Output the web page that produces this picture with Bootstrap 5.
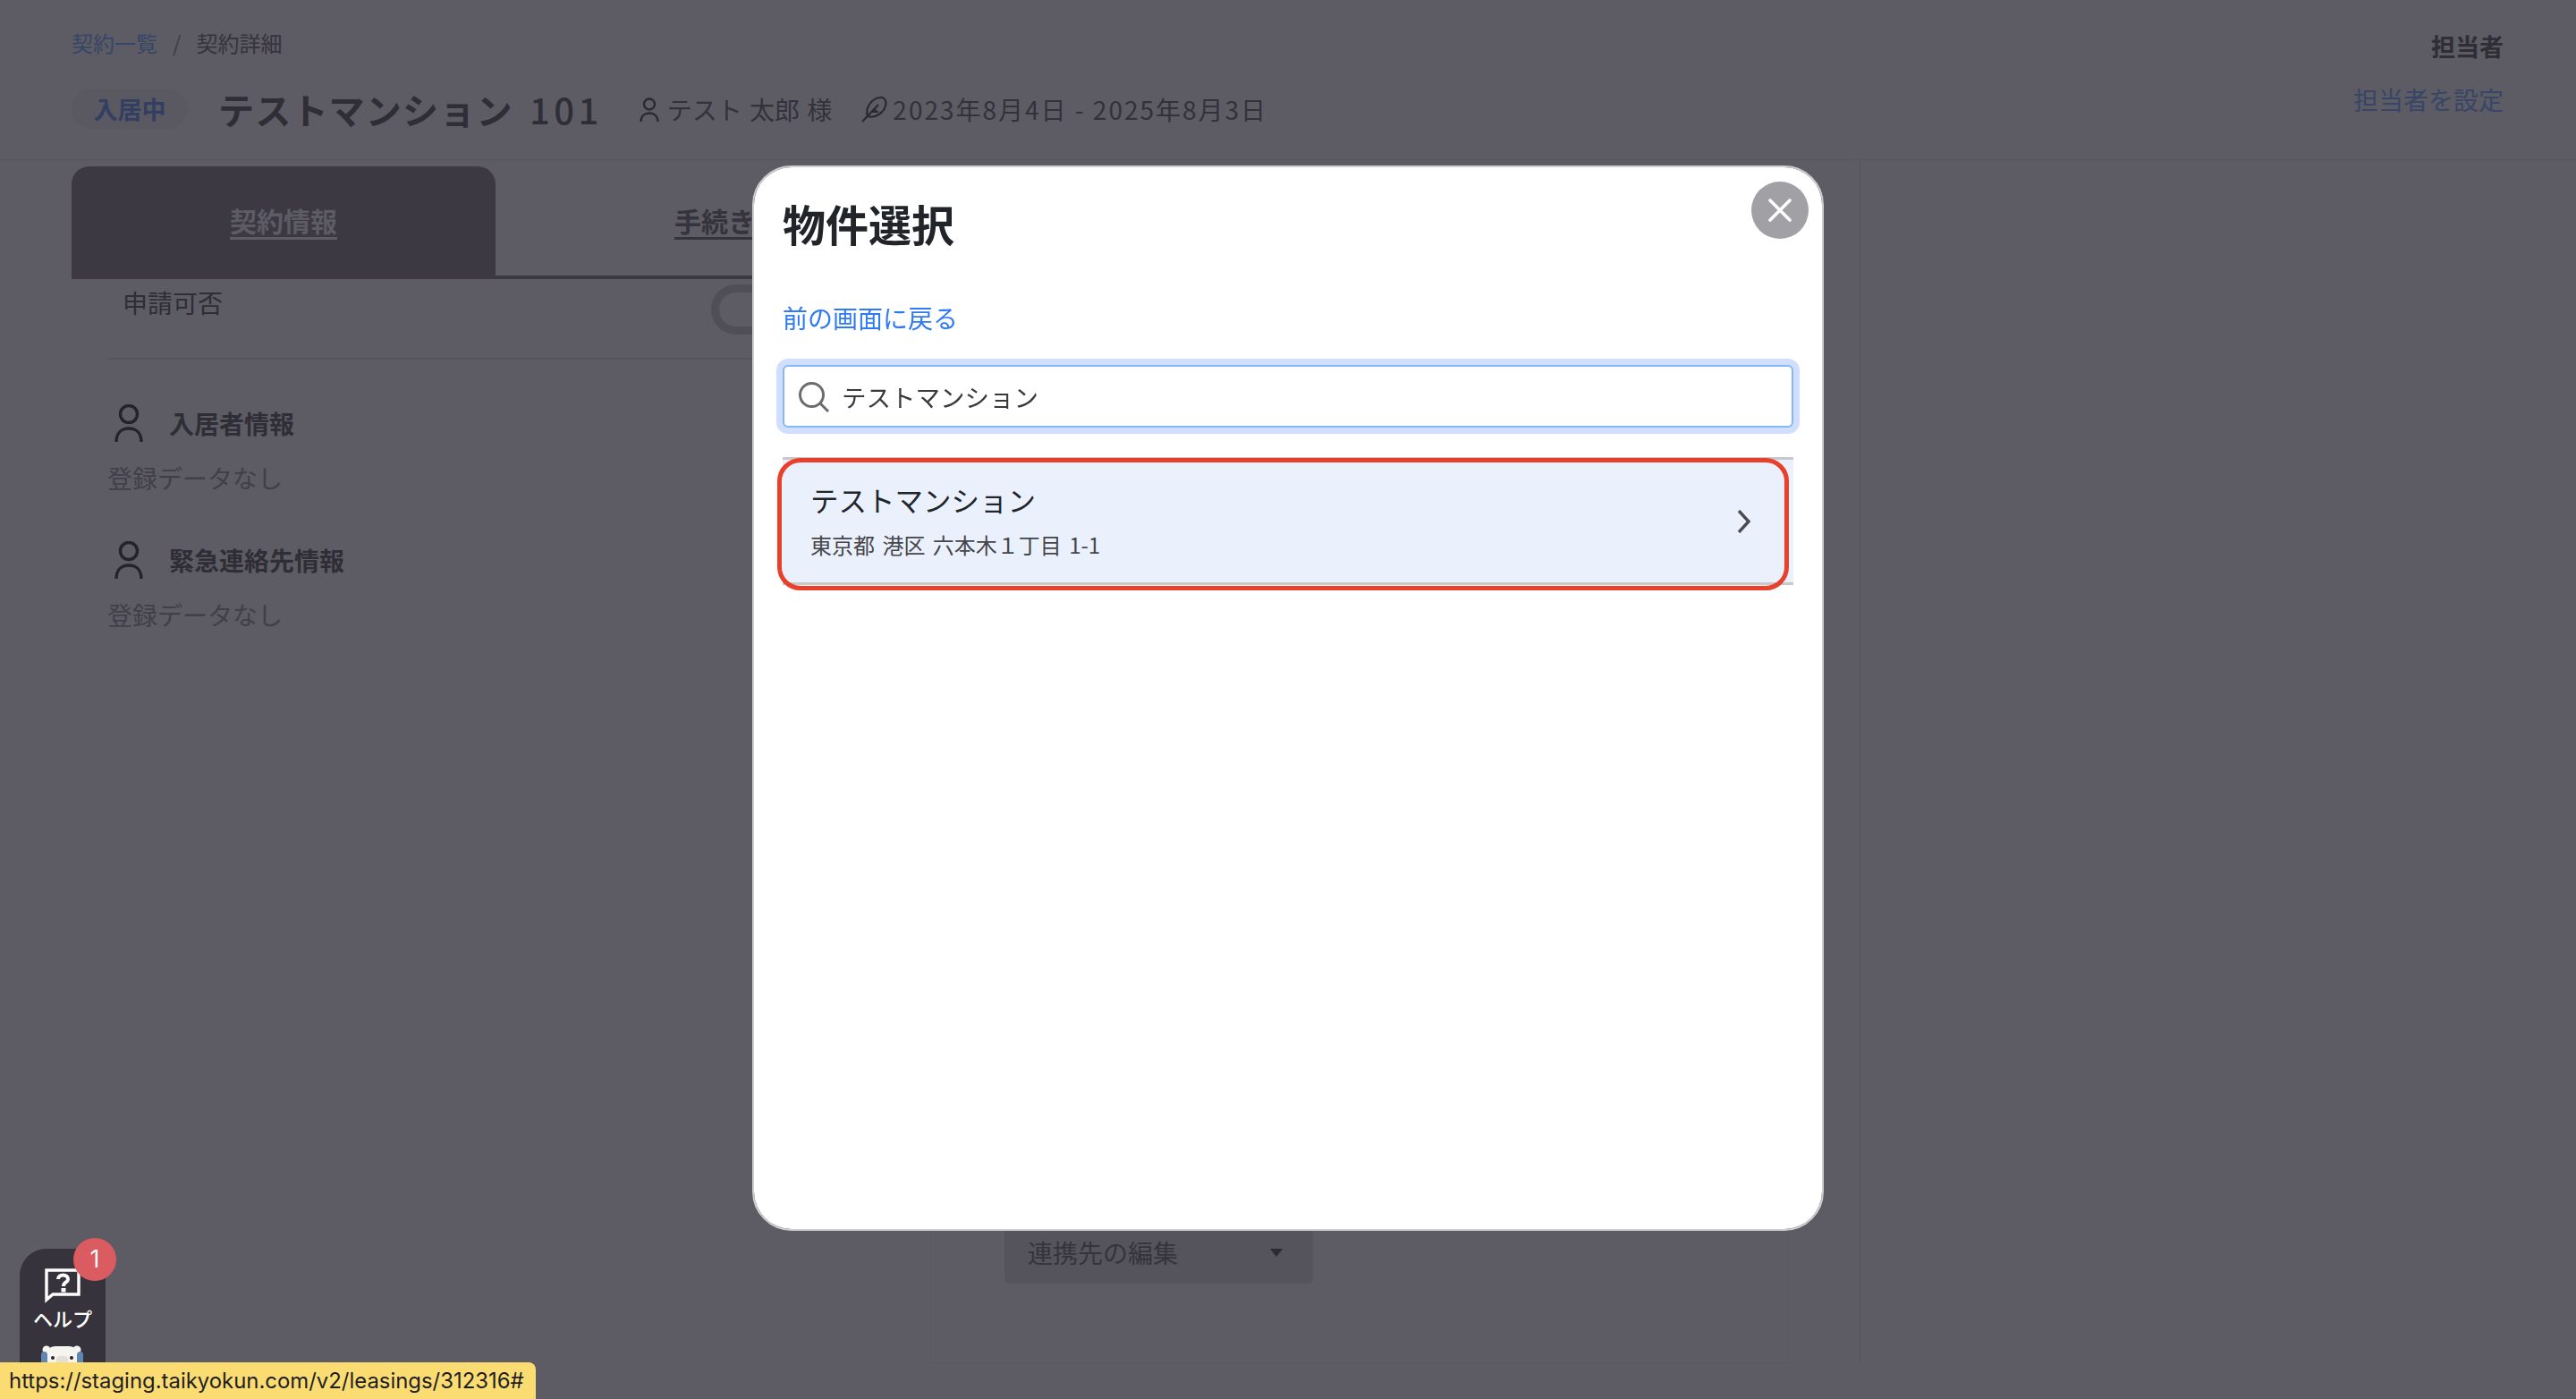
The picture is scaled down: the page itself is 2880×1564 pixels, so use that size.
<!DOCTYPE html>
<html lang="ja">
<head>
  <meta charset="UTF-8" />
  <meta name="viewport" content="width=device-width, initial-scale=1" />
  <title>物件選択</title>
  <link href="https://cdn.jsdelivr.net/npm/bootstrap@5.3.0/dist/css/bootstrap.min.css" rel="stylesheet" />
  <style>
    html, body {
      height: 100%;
      overflow: hidden;
    }

    body {
      background: #5d5b64;
      color: #2f2d35;
      font-family: "Noto Sans CJK JP", "Liberation Sans", sans-serif;
      font-size: 28px;
      line-height: 40px;
    }

    a { color: #374667; text-decoration: none; }

    /* page header */
    .page-head {
      height: 179px;
      padding: 30px 81px 0 80px;
      border-bottom: 1px solid #585660;
    }
    .crumbs { font-size: 24px; line-height: 36px; color: #35333b; }
    .crumbs .sep { margin: 0 17px; color: #3f3d45; }
    .title-row { margin-top: 34px; height: 44px; }
    .state-pill {
      width: 130px;
      height: 44px;
      background: #5a5861;
      border-radius: 22px;
      color: #333e63;
      font-weight: 700;
      font-size: 27px;
      line-height: 44px;
      text-align: center;
    }
    .prop-title {
      margin: 0 0 0 34px;
      font-size: 40px;
      line-height: 44px;
      font-weight: 700;
      color: #2f2d35;
      letter-spacing: 1.2px;
      word-spacing: 8px;
      white-space: nowrap;
    }
    .room-no { font-weight: 500; letter-spacing: 4.5px; }
    .meta-item { color: #33313a; white-space: nowrap; font-size: 28px; line-height: 44px; }
    .meta-name { margin-left: 41px; word-spacing: 2px; }
    .meta-name svg { margin-right: 9px; }
    .meta-date { margin-left: 33px; letter-spacing: 2px; }
    .meta-date svg { margin-right: 5px; }
    .owner-box { text-align: right; }
    .owner-box .owner-label { font-weight: 700; font-size: 27px; line-height: 44px; }
    .owner-box a { display: block; margin-top: 17px; line-height: 40px; }

    /* main columns */
    .page-main { height: 1345px; width: 2080px; border-right: 1px solid #55535c; padding: 7px 79px 0 80px; }
    .col-left { width: 960px; }
    .col-right { width: 960px; height: 1338px; border-left: 1px solid #5a5861; border-right: 1px solid #5a5861; border-bottom: 1px solid #5a5861; }

    .tab-row { height: 126px; border-bottom: 4px solid #3c3943; }
    .tab-item {
      width: 474px;
      font-size: 30px;
      font-weight: 700;
      text-decoration: underline;
      text-underline-offset: 6px;
      color: #35333b;
      border-radius: 20px 20px 0 0;
      padding-top: 40px;
      text-align: center;
    }
    .tab-item.on { background: #3c3943; color: #5d5b64; margin-right: 8px; margin-bottom: -4px; }

    .apply-row { height: 88px; padding: 6px 0 0 57px; }
    .apply-row .toggle-ring {
      width: 104px;
      height: 56px;
      margin-left: auto;
      margin-right: 141px;
      border: 9px solid #504e57;
      border-radius: 28px;
    }
    .rule-line { margin: 0 0 0 40px; border-top: 2px solid #55535c; }
    .info-block { padding: 50px 0 0 40px; }
    .info-block + .info-block { padding-top: 51px; }
    .info-head { height: 42px; font-weight: 700; font-size: 28px; color: #2f2d35; }
    .info-head svg { margin: 0 29px 0 8px; }
    .info-empty { margin-top: 20px; color: #413f47; }

    .link-menu {
      width: 345px;
      height: 70px;
      margin: 1179px 0 0 82px;
      padding: 0 34px 0 26px;
      background: #55535b;
      border-radius: 0 0 6px 6px;
      color: #35333b;
    }
    .link-menu .tri {
      width: 0;
      height: 0;
      border-left: 7px solid transparent;
      border-right: 7px solid transparent;
      border-top: 9px solid #2c2a32;
    }

    /* help widget */
    .help-box {
      position: fixed;
      left: 22px;
      top: 1396px;
      width: 96px;
      height: 168px;
      background: #36333c;
      border-radius: 30px 30px 0 0;
      color: #fff;
      padding-top: 22px;
    }
    .help-label { margin: 0 0 14px; font-size: 22px; line-height: 30px; font-weight: 500; }
    .help-count {
      position: absolute;
      left: 60px;
      top: -12px;
      width: 48px;
      height: 48px;
      border-radius: 50%;
      background: #da5b60;
      font-size: 27px;
      line-height: 48px;
      font-family: "Inter", sans-serif;
      text-align: center;
    }
    .url-tip {
      position: fixed;
      left: 0;
      bottom: 0;
      height: 41px;
      width: 599px;
      padding-left: 10px;
      background: #fbdc72;
      border-radius: 0 8px 0 0;
      color: #1f1f24;
      font-family: "Inter", "Liberation Sans", sans-serif;
      font-size: 23.9px;
      line-height: 41px;
      white-space: nowrap;
    }

    /* modal */
    .pick-modal .modal-dialog { max-width: 1198px; margin: 185px auto 0; }
    .pick-modal .modal-content {
      height: 1191px;
      border: 2px solid #cfcfd2;
      border-radius: 44px;
      padding: 0 32px;
      display: block;
    }
    .pick-title {
      margin: 0;
      padding-top: 30px;
      font-size: 48px;
      line-height: 64px;
      font-weight: 700;
      color: #212529;
    }
    .pick-close {
      position: absolute;
      top: 16px;
      right: 15px;
      width: 64px;
      height: 64px;
      padding: 0;
      border: 0;
      border-radius: 50%;
      background: #a1a1a5;
    }
    .pick-back { display: block; margin-top: 54px; color: #2f7bf6; line-height: 40px; }
    .pick-search { margin-top: 33px; }
    .pick-search .form-control {
      height: 70px;
      padding: 0 0 0 64px;
      border: 2px solid #86b7fe;
      border-radius: 6px;
      box-shadow: 0 0 0 7px #cfdffd;
      font-size: 27.5px;
      color: #3a3a3e;
    }
    .pick-search svg { position: absolute; left: 17px; top: 18px; }
    .pick-list { margin-top: 33px; border-radius: 0; }
    .pick-list .list-group-item {
      height: 143px;
      padding: 0 47px 0 31px;
      background: #eaf1fd;
      border: 0;
      border-top: 3px solid #c9c9cc;
      border-bottom: 3px solid #c9c9cc;
      border-radius: 0;
      color: #212529;
    }
    .pick-text { padding-bottom: 3px; }
    .pick-name { font-size: 31.5px; line-height: 44px; }
    .pick-addr { font-size: 24px; line-height: 34px; margin-top: 12px; color: #45454a; word-spacing: 3px; }
    .pick-mark {
      position: absolute;
      left: -6px;
      right: 5px;
      top: 1px;
      bottom: -6px;
      border: 5px solid #e8402a;
      border-radius: 26px;
      pointer-events: none;
    }
  </style>
</head>
<body>
  <header class="page-head d-flex justify-content-between">
    <div>
      <div class="crumbs d-flex"><a href="#">契約一覧</a><span class="sep">/</span><span>契約詳細</span></div>
      <div class="title-row d-flex align-items-center">
        <span class="state-pill">入居中</span>
        <h1 class="prop-title">テストマンション <span class="room-no">101</span></h1>
        <span class="meta-item meta-name d-flex align-items-center">
          <svg width="22" height="27" viewBox="0 0 22 27" fill="none" stroke="#2a2830" stroke-width="2.4"><circle cx="11" cy="7.500" r="6"/><path d="M1.500 27c0-6 4-9.500 9.500-9.500s9.500 3.500 9.500 9.500"/></svg>
          テスト 太郎 様
        </span>
        <span class="meta-item meta-date d-flex align-items-center">
          <svg width="30" height="30" viewBox="0 0 30 30" fill="none" stroke="#2a2830" stroke-width="2.200"><path d="M7 23C4 14 11 3 21 2c4-.4 7 2.500 6.500 7C26.500 18 16 26 7 23z"/><path d="M1 29L19 10M11 18h8M15 13l1 5"/></svg>
          2023年8月4日 - 2025年8月3日
        </span>
      </div>
    </div>
    <div class="owner-box">
      <div class="owner-label">担当者</div>
      <a href="#">担当者を設定</a>
    </div>
  </header>

  <main class="page-main d-flex">
    <section class="col-left">
      <div class="tab-row d-flex">
        <div class="tab-item on">契約情報</div>
        <div class="tab-item">手続き</div>
      </div>
      <div class="apply-row d-flex">
        <span>申請可否</span>
        <span class="toggle-ring"></span>
      </div>
      <div class="rule-line"></div>
      <div class="info-block">
        <div class="info-head d-flex align-items-center">
          <svg width="32" height="42" viewBox="0 0 32 42" fill="none" stroke="#24222b" stroke-width="3.4"><circle cx="16" cy="11" r="9.5"/><path d="M2 42c0-9 5-15 14-15s14 6 14 15"/></svg>
          入居者情報
        </div>
        <div class="info-empty">登録データなし</div>
      </div>
      <div class="info-block">
        <div class="info-head d-flex align-items-center">
          <svg width="32" height="42" viewBox="0 0 32 42" fill="none" stroke="#24222b" stroke-width="3.4"><circle cx="16" cy="11" r="9.5"/><path d="M2 42c0-9 5-15 14-15s14 6 14 15"/></svg>
          緊急連絡先情報
        </div>
        <div class="info-empty">登録データなし</div>
      </div>
    </section>
    <section class="col-right">
      <div class="link-menu d-flex align-items-center justify-content-between">
        <span>連携先の編集</span>
        <span class="tri"></span>
      </div>
    </section>
  </main>

  <div class="help-box text-center">
    <span class="help-count">1</span>
    <svg width="40" height="40" viewBox="0 0 40 40" fill="none" class="d-block mx-auto">
      <path d="M2 2h36v27H9l-7 6z" stroke="#fff" stroke-width="3.4"/>
      <path d="M15 12c0-6 11-6 11 0 0 4-5 3-5 8" stroke="#fff" stroke-width="4"/>
      <rect x="18.500" y="22" width="5" height="4.500" fill="#fff"/>
    </svg>
    <div class="help-label">ヘルプ</div>
    <svg width="48" height="30" viewBox="0 0 48 30" class="d-block mx-auto">
      <path d="M5 12C8 3 38 3 43 12" fill="none" stroke="#5f86b4" stroke-width="3"/>
      <circle cx="6" cy="7" r="4.500" fill="#f6f4ee"/>
      <circle cx="40" cy="7" r="4.500" fill="#f6f4ee"/>
      <rect x="5" y="3" width="37" height="27" rx="11" fill="#f6f4ee"/>
      <rect x="0" y="9" width="7" height="21" rx="3.500" fill="#5f86b4"/>
      <rect x="40" y="9" width="7" height="21" rx="3.500" fill="#5f86b4"/>
      <circle cx="13" cy="16" r="2" fill="#26242c"/>
      <circle cx="34" cy="16" r="2" fill="#26242c"/>
      <rect x="17" y="14" width="13" height="10" rx="4" fill="#e4dfd6"/>
    </svg>
  </div>
  <div class="url-tip">https://staging.taikyokun.com/v2/leasings/312316#</div>

  <div class="modal d-block pick-modal" tabindex="-1">
    <div class="modal-dialog">
      <div class="modal-content">
        <h2 class="pick-title">物件選択</h2>
        <button type="button" class="pick-close d-flex align-items-center justify-content-center" aria-label="閉じる">
          <svg width="26" height="26" viewBox="0 0 26 26" fill="none" stroke="#fff" stroke-width="3.6" stroke-linecap="round"><path d="M2 2l22 22M24 2L2 24"/></svg>
        </button>
        <a href="#" class="pick-back">前の画面に戻る</a>
        <div class="pick-search position-relative">
          <input type="text" class="form-control" value="テストマンション" />
          <svg width="36" height="36" viewBox="0 0 36 36" fill="none" stroke="#6c6c70" stroke-width="3"><circle cx="15.500" cy="15.500" r="13"/><path d="M25 25l9 9"/></svg>
        </div>
        <div class="pick-list list-group position-relative">
          <div class="list-group-item d-flex align-items-center justify-content-between">
            <div class="pick-text">
              <div class="pick-name">テストマンション</div>
              <div class="pick-addr">東京都 港区 六本木１丁目 1-1</div>
            </div>
            <svg width="16" height="26" viewBox="0 0 16 26" fill="none" stroke="#4a4a50" stroke-width="3.400"><path d="M2 1l11 12L2 25"/></svg>
          </div>
          <span class="pick-mark"></span>
        </div>
      </div>
    </div>
  </div>

  <script src="https://cdn.jsdelivr.net/npm/bootstrap@5.3.0/dist/js/bootstrap.bundle.min.js"></script>
</body>
</html>
